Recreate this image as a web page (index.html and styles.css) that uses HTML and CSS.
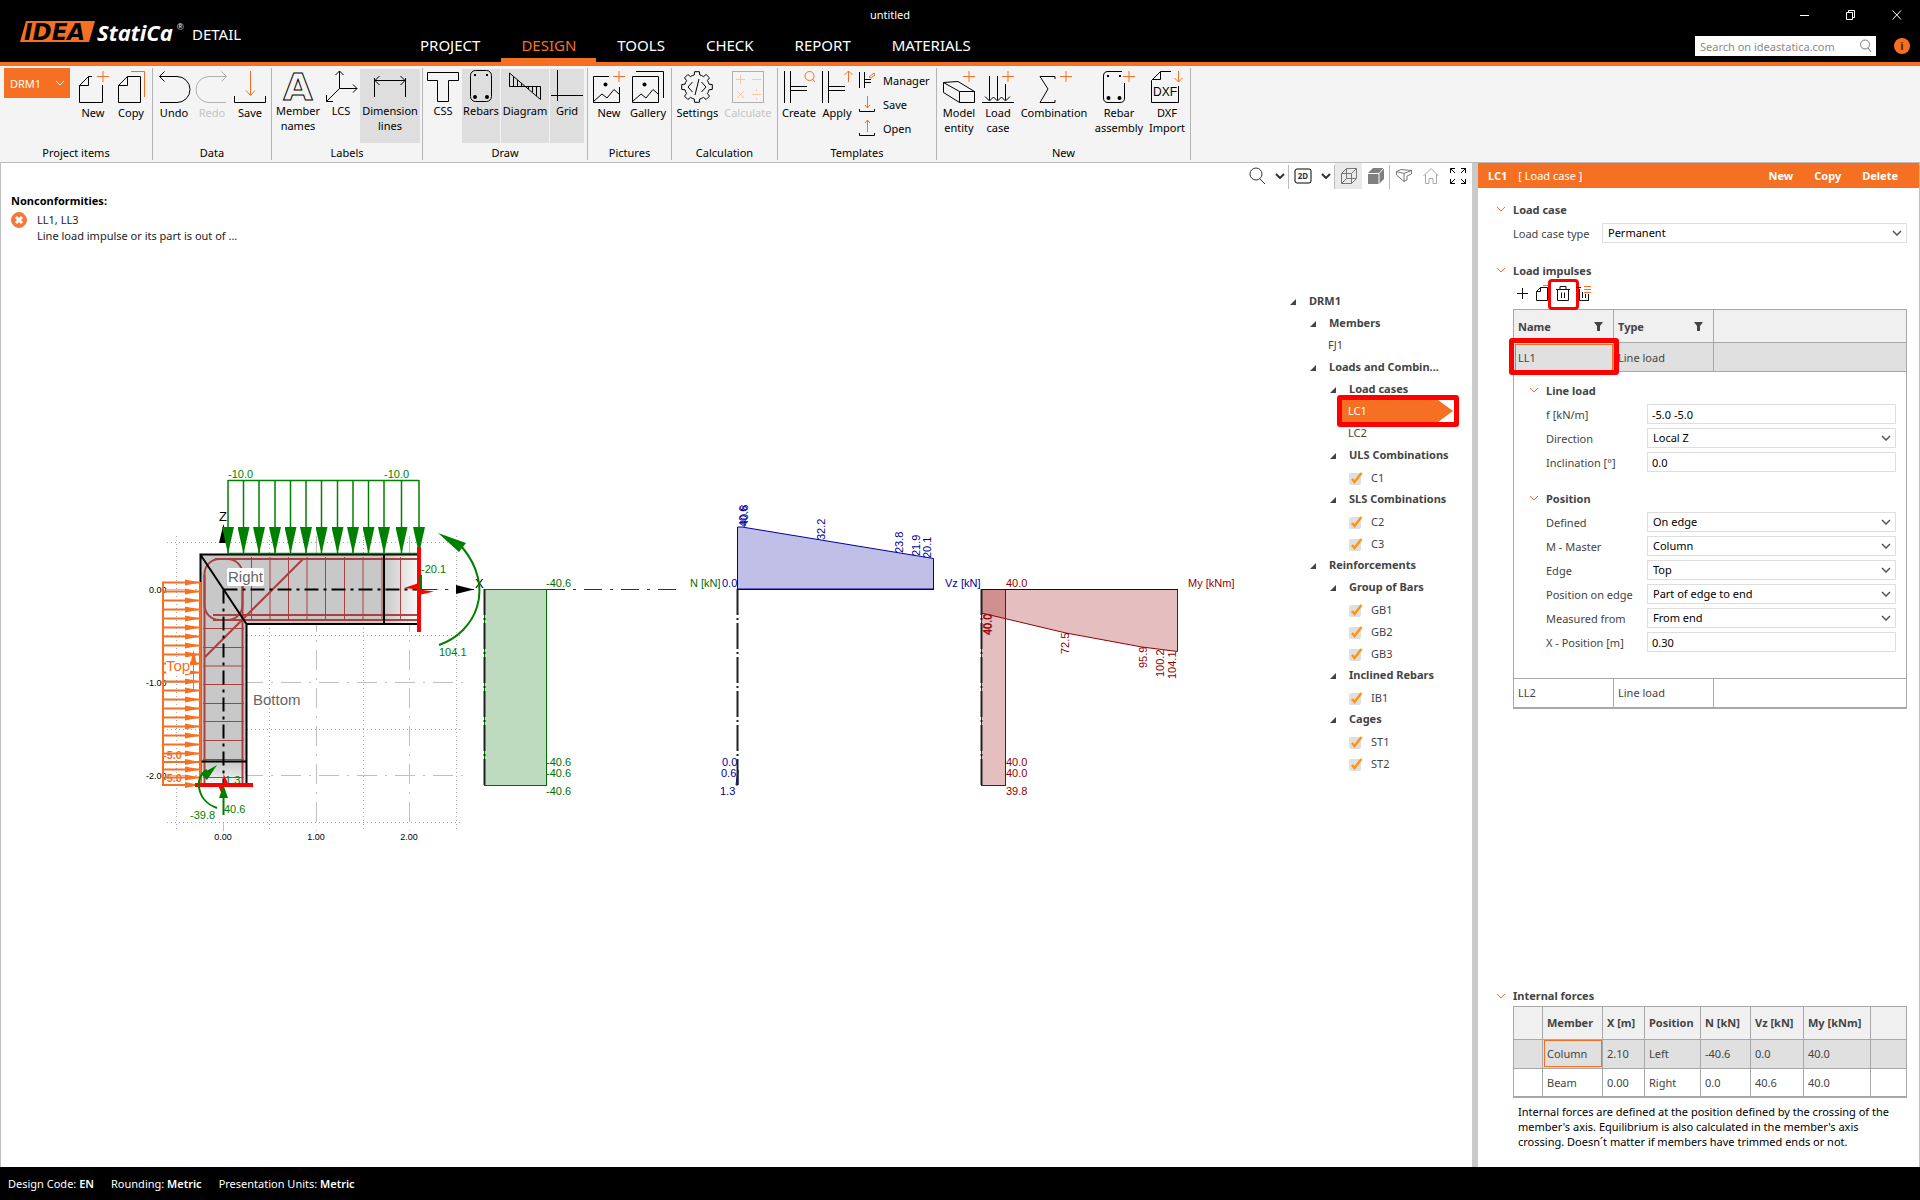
FILE: index.html
```html
<!DOCTYPE html>
<html lang="en">
<head>
<meta charset="utf-8">
<title>IDEA StatiCa Detail - untitled</title>
<link rel="stylesheet" href="styles.css">
</head>
<body>
<svg class="defs" aria-hidden="true">
  <symbol id="plus" viewBox="0 0 32 32"><path class="o" d="M20 5.5H32M26 0V11"/></symbol>
  <symbol id="chev" viewBox="0 0 10 6"><path d="M1 1l4 4 4-4"/></symbol>
</svg>

<header class="top">
  <div class="brand">
    <svg class="logo" width="166" height="28" viewBox="0 0 166 28">
      <path d="M6 3H75L69 24H0Z" fill="#f57022"/>
      <text x="4" y="22" class="logo-idea">IDEA</text>
      <text x="77" y="23" class="logo-stat">StatiCa</text>
      <text x="157" y="12" class="logo-reg">®</text>
    </svg>
    <span class="product">DETAIL</span>
  </div>
  <nav class="tabs">
    <a href="#">PROJECT</a><a href="#" class="active">DESIGN</a><a href="#">TOOLS</a><a href="#">CHECK</a><a href="#">REPORT</a><a href="#">MATERIALS</a>
  </nav>
  <h1 class="doc-title">untitled</h1>
  <div class="top-right">
    <div class="win">
      <button aria-label="Minimize"><svg width="12" height="12"><path d="M1 6.5H10"/></svg></button>
      <button aria-label="Restore"><svg width="12" height="12"><path d="M1.500 3.500H7.500V10.500H1.500ZM3.500 3V1.500H9.500V8.500H8"/></svg></button>
      <button aria-label="Close"><svg width="12" height="12"><path d="M1.500 1.500L10 10.500M10 1.500L1.500 10.500"/></svg></button>
    </div>
    <div class="search-row">
      <label class="search">
        <input type="text" placeholder="Search on ideastatica.com" aria-label="Search on ideastatica.com">
        <svg width="14" height="14"><circle cx="7" cy="5.500" r="4.500"/><path d="M10 9L13 13"/></svg>
      </label>
      <button class="info" aria-label="Info">i</button>
    </div>
  </div>
</header>

<div class="ribbon">
  <section class="group g1">
    <div class="row">
      <button class="drm">DRM1 <svg width="10" height="6"><use href="#chev"/></svg></button>
      <button class="rb w38"><svg class="ic"><path d="M25.500 14V31.500H2.500V14.500L11.500 5.500H15M11.500 5.500V14.500H2.500"/><use href="#plus"/></svg>New</button>
      <button class="rb w38"><svg class="ic"><path d="M12.500 5.500H25.500V31.500H3.500V14.500ZM12.500 5.500V14.500H3.500"/><path class="o" d="M16 .5H29.500V26"/></svg>Copy</button>
    </div>
    <h2>Project items</h2>
  </section>
  <section class="group g2">
    <div class="row">
      <button class="rb w38"><svg class="ic"><path d="M1.500 5.500H19a13 13 0 0 1 0 26H2M6.500 .5L1.500 5.500L6.500 10.500"/></svg>Undo</button>
      <button class="rb w38 off" disabled><svg class="ic"><path d="M30.500 5.500H13a13 13 0 0 0 0 26H30M25.500 .5L30.500 5.500L25.500 10.500"/></svg>Redo</button>
      <button class="rb w38"><svg class="ic"><path d="M.5 25V31.500H31.500V25"/><path class="o" d="M16.500 0V24M12 19.500L16.500 24.500L21 19.500"/></svg>Save</button>
    </div>
    <h2>Data</h2>
  </section>
  <section class="group g3 flags">
    <div class="row">
      <button class="rb w48"><svg class="ic"><text x="16" y="30" class="ic-a">A</text></svg>Member names</button>
      <button class="rb w38"><svg class="ic"><path d="M14.500 18.500V1M10.500 5L14.500 1L18.500 5M14.500 18.500H32M28 14.500L32 18.500L28 22.500M14.500 18.500L1.500 31.500M1.500 25V31.500H8"/></svg>LCS</button>
      <button class="rb w60 on"><svg class="ic"><path d="M.5 8V27M31.500 8V27M1 10.500H31M5.500 6L1 10.500L5.500 15M26.500 6L31 10.500L26.500 15"/></svg>Dimension lines</button>
    </div>
    <h2>Labels</h2>
  </section>
  <section class="group g4 flags">
    <div class="row">
      <button class="rb w38"><svg class="ic"><path d="M.5 2.500H31.500V10.500H21.500V31.500H10.500V10.500H.5Z"/></svg>CSS</button>
      <button class="rb w38 on"><svg class="ic"><rect x="5.500" y=".5" width="21" height="31" rx="5"/><path class="f" d="M9 4h2v2H9zM21 4h2v2h-2z"/><circle class="f" cx="10" cy="27" r="2"/><circle class="f" cx="22" cy="27" r="2"/></svg>Rebars</button>
      <button class="rb w48 on"><svg class="ic"><path d="M.5 16.500V3L31.500 29.500V16.500ZM4.500 7V16M8.500 10V16M12.500 13V16M19.500 17V19M23.500 17V22M27.500 17V26"/></svg>Diagram</button>
      <button class="rb w34 on"><svg class="ic"><path d="M6.500 0V31M0 25.500H32"/></svg>Grid</button>
    </div>
    <h2>Draw</h2>
  </section>
  <section class="group g5">
    <div class="row">
      <button class="rb w38"><svg class="ic"><path d="M16 5.500H.5V31.500H26.500V16M1 30L9 23L14 27L21 18.500L26 23"/><circle class="f" cx="12.500" cy="13.500" r="2"/><use href="#plus"/></svg>New</button>
      <button class="rb w40"><svg class="ic"><path d="M.5 5.500H26.500V31.500H.5ZM1 30L9 23L14 27L21 18.500L26 23M4 .5H31.500V27"/><circle class="f" cx="12.500" cy="13.500" r="2"/></svg>Gallery</button>
    </div>
    <h2>Pictures</h2>
  </section>
  <section class="group g6">
    <div class="row">
      <button class="rb w48"><svg class="ic"><path transform="translate(16 16)" d="M12-2.800L15.300-2.400V2.400L12 2.800A12.300 12.300 0 0 1 10.400 6.500L12.500 9.100L9.100 12.500L6.500 10.400A12.300 12.300 0 0 1 2.800 12L2.400 15.300H-2.400L-2.800 12A12.300 12.300 0 0 1-6.500 10.400L-9.100 12.500L-12.500 9.100L-10.400 6.500A12.300 12.300 0 0 1-12 2.800L-15.300 2.400V-2.400L-12-2.800A12.300 12.300 0 0 1-10.400-6.500L-12.500-9.100L-9.100-12.500L-6.500-10.400A12.300 12.300 0 0 1-2.800-12L-2.400-15.300H2.400L2.800-12A12.300 12.300 0 0 1 6.500-10.400L9.100-12.500L12.500-9.100L10.400-6.500A12.300 12.300 0 0 1 12-2.800Z"/><path d="M11.500 11L7 16L11.500 21M20.500 11L25 16L20.500 21M18 8L14 24"/></svg>Settings</button>
      <button class="rb w56 off" disabled><svg class="ic"><rect x=".5" y=".5" width="31" height="31"/><path class="p" d="M4 8.500H13M8.500 4V13M20 8.500H29M5 20L12 27M12 20L5 27M20 23.500H29M24.500 18V20M24.500 27V29"/></svg>Calculate</button>
    </div>
    <h2>Calculation</h2>
  </section>
  <section class="group g7">
    <div class="row">
      <button class="rb w38"><svg class="ic"><path d="M1.500 0V32M7.500 0V32M8 15.500H24M8 19.500H24"/><circle class="o" cx="26.500" cy="5" r="4.500"/><path class="o" d="M29.500 8L32 11"/></svg>Create</button>
      <button class="rb w38"><svg class="ic"><path d="M1.500 0V32M7.500 0V32M8 15.500H24M8 19.500H24"/><path class="o" d="M27.500 0V11M23.500 4L27.500 0L31.500 4"/></svg>Apply</button>
      <div class="stack">
        <button><svg width="16" height="16"><path d="M.5 0V16M5.500 0V16M6 7.500H12M6 10.500H12"/><path class="o" d="M10 5L15 1L16 3L12 6Z"/></svg>Manager</button>
        <button><svg width="16" height="16"><path d="M.5 13V15.500H15.500V13"/><path class="o" d="M8.500 0V12M6 9L8.500 12L11 9"/></svg>Save</button>
        <button><svg width="16" height="16"><path d="M.5 13V15.500H15.500V13"/><path class="o" d="M8.500 12V0M6 3L8.500 0L11 3"/></svg>Open</button>
      </div>
    </div>
    <h2>Templates</h2>
  </section>
  <section class="group g8">
    <div class="row">
      <button class="rb w40"><svg class="ic"><path d="M.5 11.500L16.500 20.500H31.500V31.500H16.500L.5 21.500ZM16.500 20.500V31.500M.5 11.500L15 10.500L31.500 20.500"/><use href="#plus"/></svg>Model entity</button>
      <button class="rb w38"><svg class="ic"><path d="M0 31.500H32M7.500 5V29M15.500 5V29M23.500 13V29M3 25.500L7.500 30L11.500 26L15.500 30L19.500 26L23.500 30L28 25.500"/><use href="#plus"/></svg>Load case</button>
      <button class="rb w74"><svg class="ic"><path d="M17 8V5.500H2L10 18L2 31.500H17V29"/><use href="#plus" x="2"/></svg>Combination</button>
      <button class="rb w56"><svg class="ic"><path d="M19 .5H5Q.5 .5 .5 5V27Q.5 31.500 5 31.500H17Q21.500 31.500 21.500 27V12"/><path class="f" d="M4 4h2v2H4zM16 4h2v2h-2z"/><circle class="f" cx="5.500" cy="27" r="2"/><circle class="f" cx="16.500" cy="27" r="2"/><use href="#plus"/></svg>Rebar assembly</button>
      <button class="rb w40"><svg class="ic"><path d="M20 .5H9.500L.5 9.500V31.500H27.500V15M9.500 .5V8.500H1"/><text x="14" y="25" class="ic-dxf">DXF</text><path class="o" d="M27.500 0V11M23.500 7L27.500 11L31.500 7"/></svg>DXF Import</button>
    </div>
    <h2>New</h2>
  </section>
</div>

<main class="work">
  <div class="view">
    <div class="view-tools">
      <button class="t34"><svg width="18" height="18"><circle cx="8" cy="7" r="6"/><path d="M12 12L17 17"/></svg></button>
      <button class="t16"><svg class="dd" width="10" height="6"><use href="#chev"/></svg></button>
      <i></i>
      <button class="t34"><svg width="18" height="18"><rect class="thick" x="1" y="2" width="16" height="14" rx="2"/><text x="9" y="12" class="ic-2d">2D</text></svg></button>
      <button class="t16"><svg class="dd" width="10" height="6"><use href="#chev"/></svg></button>
      <i></i>
      <button class="t28 sel"><svg width="18" height="18"><path class="g" d="M1.500 6.500H11.500V16.500H1.500ZM6.500 1.500H16.500V11.500L11.500 16.500M1.500 6.500L6.500 1.500V11.500H16.500M11.500 6.500L16.500 1.500M1.500 16.500L6.500 11.500"/></svg></button>
      <button class="t28"><svg width="18" height="18"><path class="gf" d="M1 6L6 1H17V12L12 17H1Z"/><path class="wl" d="M1 6.500H12V17M12 6.500L17 1"/></svg></button>
      <i></i>
      <button class="t28"><svg width="18" height="18"><path class="g" d="M1.500 4.500L6 2.500L16.500 3.500L9 6.500ZM1.500 4.500V8L9 14.500V6.500M9 14.500L12 13V9L16.500 7V3.500"/></svg></button>
      <button class="t28"><svg width="18" height="18"><path class="g2" d="M1.500 9L9 1.500L16.500 9M3.500 7.500V16.500H7V11.500H11V16.500H14.500V7.500"/></svg></button>
      <button class="t28"><svg width="18" height="18"><path class="ex" d="M1.500 6V1.500H6M1.500 1.500L6 6M12 1.500H16.500V6M16.500 1.500L12 6M1.500 12V16.500H6M1.500 16.500L6 12M16.500 12V16.500H12M16.500 16.500L12 12"/></svg></button>
    </div>
    <div class="view-body">
      <div class="scene">
        <div class="nonconf">
          <strong>Nonconformities:</strong>
          <div class="issue">
            <svg width="16" height="16"><circle cx="8" cy="8" r="7.500" fill="#f5793a" stroke="#f5793a"/><path d="M5 5L11 11M11 5L5 11" stroke="#fff" stroke-width="3"/></svg>
            <p>LL1, LL3<br>Line load impulse or its part is out of ...</p>
          </div>
        </div>
        <svg class="drawing" width="1279" height="620" viewBox="1 244 1279 620">
          <defs>
            <linearGradient id="endX"><stop offset="0" stop-color="#c8c8c8"/><stop offset="1" stop-color="#fafafa"/></linearGradient>
            <linearGradient id="endY" x2="0" y2="1"><stop offset="0" stop-color="#c8c8c8"/><stop offset="1" stop-color="#fafafa"/></linearGradient>
            <marker id="gArr" markerUnits="userSpaceOnUse" markerWidth="27" markerHeight="12" refX="27" refY="6" orient="auto"><path d="M0 0L27 6L0 12Z" fill="#008000"/></marker>
            <marker id="oArr" markerUnits="userSpaceOnUse" markerWidth="15" markerHeight="8" refX="15" refY="4" orient="auto"><path d="M0 1L15 4L0 7Z" fill="#f57022"/></marker>
          </defs>
          <g class="dots"><path d="M176.500 536V831M269.500 536V831M363.500 536V831M456.500 536V831M167 542.500H463M167 635.500H463M167 729.500H463M167 822.500H463"/></g>
          <g class="dash"><path d="M316.500 536V831M409.500 536V831M223.500 785V831M167 589.500H200M419 589.500H460M167 682.500H465M167 775.500H465"/></g>
          <g class="tick"><text x="149" y="593">0.00</text><text x="146" y="686">-1.00</text><text x="146" y="779">-2.00</text><text x="223" y="840" class="mid">0.00</text><text x="316" y="840" class="mid">1.00</text><text x="409" y="840" class="mid">2.00</text></g>

          <path d="M200 554H384V624H247V762H200Z" fill="#c8c8c8"/>
          <rect x="384" y="554" width="35" height="70" fill="url(#endX)"/>
          <rect x="200" y="762" width="47" height="23" fill="url(#endY)"/>
          <g class="rebar">
            <path d="M215 559H419M213 615H419M213 620H419M204.500 575V784M242.500 575V784M303 559L205 657"/>
            <rect x="204.500" y="559" width="38" height="61" rx="15"/>
            <path class="thin" d="M251.500 557V621M270 557V621M288.500 557V621M307 557V621M325.500 557V621M344.500 557V621M363 557V621M382 557V621M400.500 557V621M203 628.500H244M203 647.500H244M203 666H244M203 684.500H244M203 703.500H244M203 721.500H244M203 740.500H244M203 759.500H244M203 777.500H244"/>
          </g>
          <path class="outline" d="M419 554.500H200.500V785M419 624H246.500V785M200 554L246.500 624M384 554V624M200 761.500H247"/>
          <path class="axis" d="M223.500 589.500H419M223.500 589.500V785"/>
          <path class="axis-thin" d="M419 589.500H476M547 589.500H677"/>
          <path d="M223.500 524L219 543H228ZM456 585V594L474 589.500Z"/>
          <text x="219" y="521" class="ax">Z</text><text x="475" y="588" class="ax">X</text>

          <g class="gload">
            <path d="M228 480.500H419M228 553.500H419"/>
            <path class="m" d="M228 480V554"/><path class="m" d="M243.500 480V554"/><path class="m" d="M259 480V554"/><path class="m" d="M275 480V554"/><path class="m" d="M290.500 480V554"/><path class="m" d="M306 480V554"/><path class="m" d="M321.500 480V554"/><path class="m" d="M337.500 480V554"/><path class="m" d="M353 480V554"/><path class="m" d="M368.500 480V554"/><path class="m" d="M384 480V554"/><path class="m" d="M401.500 480V554"/><path class="m" d="M419 480V554"/>
          </g>
          <g class="oload">
            <path d="M163 582V786M200.500 582V786"/>
            <path class="m" d="M162 582.500H200"/><path class="m" d="M162 591.500H200"/><path class="m" d="M162 600.500H200"/><path class="m" d="M162 609.500H200"/><path class="m" d="M162 618.500H200"/><path class="m" d="M162 627.500H200"/><path class="m" d="M162 636.500H200"/><path class="m" d="M162 645.500H200"/><path class="m" d="M162 654.500H200"/><path class="m" d="M162 663.500H200"/><path class="m" d="M162 672.500H200"/><path class="m" d="M162 681.500H200"/><path class="m" d="M162 690.500H200"/><path class="m" d="M162 699.500H200"/><path class="m" d="M162 708.500H200"/><path class="m" d="M162 717.500H200"/><path class="m" d="M162 726.500H200"/><path class="m" d="M162 735.500H200"/><path class="m" d="M162 744.500H200"/><path class="m" d="M162 753.500H200"/><path class="m" d="M162 762H200"/><path class="m" d="M162 769.500H200"/><path class="m" d="M162 777.500H200"/><path class="m" d="M162 785H200"/>
            <rect x="166" y="657" width="24" height="17" rx="2" fill="#fff" stroke="none"/>
            <path class="m1" d="M193.500 690V655"/><path d="M193.500 650L190 665H197Z" class="of"/>
          </g>
          <text x="166" y="671" class="lbl otext">Top</text>
          <text x="163" y="759" class="val otext b">-5.0</text><text x="163" y="782" class="val otext b">-5.0</text>
          <rect x="227" y="568" width="37" height="18" rx="2" fill="#fff"/>
          <text x="228" y="582" class="lbl">Right</text>
          <text x="253" y="705" class="lbl">Bottom</text>

          <g class="red"><path d="M419 547V632M195 785H253"/><path class="rf" d="M404 588L419 583V589.500L434 591.500L419 595V589.500ZM223.500 774L229 785L223.500 785L222 795L218 785H223.500Z"/></g>
          <g class="gm">
            <path d="M439 645C476 632 496 588 462 547M421 575V589M217 808C196 801 194 776 207 770M223.500 815V795"/>
            <path class="gf2" d="M438 533L466 543L459 552ZM217 765L201 774L207 780ZM223.500 785L219 798H228Z"/>
          </g>
          <g class="val gtext"><text x="228" y="478">-10.0</text><text x="384" y="478">-10.0</text><text x="421" y="573">-20.1</text><text x="439" y="656">104.1</text><text x="190" y="819">-39.8</text><text x="224" y="813">40.6</text><text x="225" y="784">1.3</text></g>

          <g class="val ntext">
            <rect x="484.500" y="589.500" width="62" height="196"/>
            <text x="546" y="587">-40.6</text><text x="546" y="766">-40.6</text><text x="546" y="777">-40.6</text><text x="546" y="795">-40.6</text><text x="690" y="587">N [kN]</text>
          </g>
          <path class="base" d="M484.500 589V785"/>

          <g class="val vtext">
            <path d="M737.500 589V527H742L933.500 558.500V589Z"/><path d="M738 770L736 785H738Z"/>
            <text x="722" y="587">0.0</text><text x="722" y="766">0.0</text><text x="721" y="777">0.6</text><text x="720" y="795">1.3</text><text x="945" y="587">Vz [kN]</text>
            <text transform="translate(747 527) rotate(-90)">40.6</text><text transform="translate(748 526) rotate(-90)">40.8</text><text transform="translate(825 540) rotate(-90)">32.2</text><text transform="translate(903 553) rotate(-90)">23.8</text><text transform="translate(920 556) rotate(-90)">21.9</text><text transform="translate(931 558) rotate(-90)">20.1</text>
          </g>
          <path class="base" d="M737.500 589V785"/><path class="solid" d="M738 589.500H934"/>

          <g class="val mtext">
            <path d="M981.500 589.500V613L1066 633L1142 647L1177.500 651.500V589.500Z"/><rect x="981.500" y="589.500" width="24" height="196"/>
            <text x="1006" y="587">40.0</text><text x="1006" y="766">40.0</text><text x="1006" y="777">40.0</text><text x="1006" y="795">39.8</text><text x="1188" y="587">My [kNm]</text>
            <text transform="translate(991 635) rotate(-90)">40.0</text><text transform="translate(992 635) rotate(-90)">40.0</text><text transform="translate(1069 654) rotate(-90)">72.5</text><text transform="translate(1147 668) rotate(-90)">95.9</text><text transform="translate(1164 677) rotate(-90)">100.2</text><text transform="translate(1176 679) rotate(-90)">104.1</text>
          </g>
          <path class="base" d="M981.500 589V785"/><path class="solid" d="M982 589.500H1178"/>
        </svg>
      </div>
      <ul class="tree">
        <li class="n l0">DRM1</li>
        <li class="n l1">Members</li>
        <li class="leaf l1">FJ1</li>
        <li class="n l1">Loads and Combin...</li>
        <li class="n l2">Load cases</li>
        <li class="leaf l2 current">LC1</li>
        <li class="leaf l2">LC2</li>
        <li class="n l2">ULS Combinations</li>
        <li class="chk"><label><input type="checkbox" checked>C1</label></li>
        <li class="n l2">SLS Combinations</li>
        <li class="chk"><label><input type="checkbox" checked>C2</label></li>
        <li class="chk"><label><input type="checkbox" checked>C3</label></li>
        <li class="n l1">Reinforcements</li>
        <li class="n l2">Group of Bars</li>
        <li class="chk"><label><input type="checkbox" checked>GB1</label></li>
        <li class="chk"><label><input type="checkbox" checked>GB2</label></li>
        <li class="chk"><label><input type="checkbox" checked>GB3</label></li>
        <li class="n l2">Inclined Rebars</li>
        <li class="chk"><label><input type="checkbox" checked>IB1</label></li>
        <li class="n l2">Cages</li>
        <li class="chk"><label><input type="checkbox" checked>ST1</label></li>
        <li class="chk"><label><input type="checkbox" checked>ST2</label></li>
      </ul>
    </div>
  </div>

  <aside class="panel">
    <div class="panel-head">
      <b>LC1</b><span>[ Load case ]</span>
      <div class="acts"><button>New</button><button>Copy</button><button>Delete</button></div>
    </div>
    <div class="panel-body">
      <h3><svg width="10" height="6"><use href="#chev"/></svg>Load case</h3>
      <div class="field outer"><label for="lct">Load case type</label><select id="lct"><option>Permanent</option></select></div>
      <h3 class="h-imp"><svg width="10" height="6"><use href="#chev"/></svg>Load impulses</h3>
      <div class="imp-tools">
        <button aria-label="Add"><svg width="16" height="16"><path d="M4 8.500H15M9.500 3V14"/></svg></button>
        <button aria-label="Copy"><svg width="16" height="16"><path d="M6.500 2.500H13.500V15.500H2.500V6.500ZM6.500 2.500V6.500H2.500"/><path class="o" d="M9 .5H16V12"/></svg></button>
        <button aria-label="Delete" class="marked"><svg width="16" height="16"><path d="M1 4.500H15M5 4V1.500H11V4M2.500 4.500V15.500H13.500V4.500M6.500 7.500V13M9.500 7.500V13"/></svg></button>
        <button aria-label="Delete all"><svg width="16" height="16"><path d="M0 2.500H5M3.500 4V15.500H12.500V9M6.500 7V13M9.500 9V13"/><path class="o" d="M8 1.500H15M8 4.500H15M8 7.500H15"/></svg></button>
      </div>
      <table class="grid imp">
        <colgroup><col class="c100"><col class="c100"><col></colgroup>
        <thead><tr>
          <th>Name <svg width="10" height="10"><path class="f" d="M0 0H9L6 4V9H3V4Z"/></svg></th>
          <th>Type <svg width="10" height="10"><path class="f" d="M0 0H9L6 4V9H3V4Z"/></svg></th><th></th></tr></thead>
        <tbody>
          <tr class="cur"><td class="cell-cur marked-cell">LL1</td><td>Line load</td><td></td></tr>
          <tr class="detail"><td colspan="3">
            <h3><svg width="10" height="6"><use href="#chev"/></svg>Line load</h3>
            <div class="field"><label for="f1">f [kN/m]</label><input id="f1" type="text" value="-5.0 -5.0"></div>
            <div class="field"><label for="f2">Direction</label><select id="f2"><option>Local Z</option></select></div>
            <div class="field"><label for="f3">Inclination [°]</label><input id="f3" type="text" value="0.0"></div>
            <h3 class="h-pos"><svg width="10" height="6"><use href="#chev"/></svg>Position</h3>
            <div class="field"><label for="p1">Defined</label><select id="p1"><option>On edge</option></select></div>
            <div class="field"><label for="p2">M - Master</label><select id="p2"><option>Column</option></select></div>
            <div class="field"><label for="p3">Edge</label><select id="p3"><option>Top</option></select></div>
            <div class="field"><label for="p4">Position on edge</label><select id="p4"><option>Part of edge to end</option></select></div>
            <div class="field"><label for="p5">Measured from</label><select id="p5"><option>From end</option></select></div>
            <div class="field"><label for="p6">X - Position [m]</label><input id="p6" type="text" value="0.30"></div>
          </td></tr>
          <tr><td>LL2</td><td>Line load</td><td></td></tr>
        </tbody>
      </table>
      <div class="forces">
        <h3><svg width="10" height="6"><use href="#chev"/></svg>Internal forces</h3>
        <table class="grid">
          <colgroup><col class="c29"><col class="c60"><col class="c42"><col class="c56"><col class="c50"><col class="c53"><col class="c67"><col></colgroup>
          <thead><tr><th></th><th>Member</th><th>X [m]</th><th>Position</th><th>N [kN]</th><th>Vz [kN]</th><th>My [kNm]</th><th></th></tr></thead>
          <tbody>
            <tr class="cur"><td></td><td class="cell-cur">Column</td><td>2.10</td><td>Left</td><td>-40.6</td><td>0.0</td><td>40.0</td><td></td></tr>
            <tr><td></td><td>Beam</td><td>0.00</td><td>Right</td><td>0.0</td><td>40.6</td><td>40.0</td><td></td></tr>
          </tbody>
        </table>
        <p>Internal forces are defined at the position defined by the crossing of the member's axis. Equilibrium is also calculated in the member's axis crossing. Doesn´t matter if members have trimmed ends or not.</p>
      </div>
    </div>
  </aside>
</main>

<footer class="status"><span>Design Code: <b>EN</b></span><span>Rounding: <b>Metric</b></span><span>Presentation Units: <b>Metric</b></span></footer>
</body>
</html>
```
FILE: styles.css
```css
*, *::before, *::after { box-sizing: border-box; }
body {
  margin: 0;
  min-height: 100vh;
  display: flex;
  flex-direction: column;
  font: 11px/15px "Noto Sans", "Open Sans", sans-serif;
  color: #000;
  background: #fff;
}
button, input, select { font: inherit; color: inherit; }
button { border: 0; padding: 0; margin: 0; background: none; }
h1, h2, h3, p, ul { margin: 0; padding: 0; font-size: inherit; }
a { text-decoration: none; color: inherit; }
svg { fill: none; stroke: currentColor; display: block; flex: none; }
svg text { stroke: none; fill: currentColor; }
.defs { position: absolute; width: 0; height: 0; }
.o { stroke: #f57022; fill: none; }
.p { stroke: #fbc6a5; }
.f { fill: currentColor; stroke: none; }

/* title bar */
.top {
  background: #000;
  color: #fff;
  height: 66px;
  border-bottom: 4px solid #f57022;
  display: flex;
  position: relative;
  flex: none;
}
.brand { width: 400px; padding: 18px 0 0 20px; display: flex; gap: 6px; }
.logo .logo-idea { font: oblique bold 23px "DejaVu Sans", sans-serif; fill: #000; }
.logo .logo-stat { font: italic bold 22px "Open Sans", sans-serif; fill: #fff; }
.logo .logo-reg { font: 9px "Liberation Sans", sans-serif; fill: #fff; }
.logo path { stroke: none; }
.product { font-size: 15px; line-height: 33px; }
.tabs { display: flex; align-items: flex-end; gap: 1px; }
.tabs a { padding: 0 20px; font-size: 15px; line-height: 26px; border-bottom: 4px solid transparent; }
.tabs .active { color: #f57022; border-color: #f57022; }
.doc-title { position: absolute; left: 0; right: 140px; top: 7px; text-align: center; font-weight: 400; pointer-events: none; }
.top-right { margin-left: auto; padding-right: 10px; display: flex; flex-direction: column; align-items: flex-end; }
.win { display: flex; gap: 34px; padding: 9px 7px 0 0; height: 36px; }
.win button { height: 12px; }
.search-row { display: flex; align-items: center; gap: 18px; }
.search { display: flex; align-items: center; width: 181px; height: 20px; background: #fff; color: #777; padding: 0 4px 0 5px; }
.search input { border: 0; padding: 0; min-width: 0; flex: 1; outline: 0; background: none; }
.search input::placeholder { color: #8a8a8a; }
.info { width: 16px; height: 16px; border-radius: 8px; background: #f57022; color: #5a2000; font-weight: 700; line-height: 16px; }

/* ribbon */
.ribbon { display: flex; background: #f4f4f4; border-bottom: 1px solid #bbb; height: 97px; padding-top: 2px; flex: none; }
.group { display: flex; flex-direction: column; height: 92px; border-right: 1px solid #b4b4b4; flex: none; }
.g1 { width: 153px; } .g2 { width: 119px; } .g3 { width: 151px; } .g4 { width: 165px; }
.g5 { width: 84px; } .g6 { width: 106px; } .g7 { width: 159px; } .g8 { width: 254px; }
.group .row { display: flex; flex: 1; padding: 1px 2px 0; }
.group h2 { font-weight: 400; text-align: center; line-height: 15px; height: 15px; }
.drm { width: 66px; height: 30px; margin: -1px 4px 0 2px; background: #f57022; color: #fff; display: flex; align-items: center; justify-content: space-between; padding: 0 5px 0 6px; }
.rb { height: 74px; padding-top: 2px; display: flex; flex-direction: column; align-items: center; text-align: center; gap: 2px; line-height: 15px; }
.flags .rb { padding-top: 1px; gap: 1px; }
.g4 .row { padding-left: 1px; }
.g4 .on + .on { margin-left: 1px; }
.ic { width: 32px; height: 32px; overflow: visible; }
.w34 { width: 34px; } .w38 { width: 38px; } .w40 { width: 40px; } .w48 { width: 48px; }
.w56 { width: 56px; } .w60 { width: 60px; } .w74 { width: 74px; }
.on { background: #dedede; }
.off { color: #c4c4c4; }
.off .ic { stroke: #b0b0b0; }
.ic-a { font: bold 38px "DejaVu Sans", sans-serif; text-anchor: middle; }
svg .ic-a { fill: none; stroke: #000; }
.ic-dxf { font: 12px "Liberation Sans", sans-serif; text-anchor: middle; }
.stack { display: flex; flex-direction: column; gap: 8px; padding: 3px 0 0 3px; }
.stack button { display: flex; align-items: center; gap: 8px; height: 16px; }

/* work area */
.work { flex: 1; display: flex; }
.view { flex: 1; min-width: 0; border-left: 1px solid #c0c0c0; display: flex; flex-direction: column; }
.view-tools { display: flex; justify-content: flex-end; height: 26px; color: #333; padding-right: 1px; }
.view-tools button { display: flex; align-items: center; justify-content: center; }
.view-tools i { width: 1px; background: #bbb; margin: 2px 0 0; }
.t34 { width: 28px; } .t16 { width: 17px; } .t28 { width: 27px; }
.sel { background: #eaeaea; }
.thick { stroke: #000; }
.dd { stroke-width: 2; }
.ex { stroke: #000; }
.ic-2d { font: bold 8px "Noto Sans", sans-serif; text-anchor: middle; }
.g { stroke: #777; } .g2 { stroke: #aaa; } .gf { fill: #808080; stroke: none; } .wl { stroke: #fff; }
.view-body { flex: 1; display: flex; }
.scene { flex: 1; min-width: 0; }
.nonconf { padding: 4px 10px 0; height: 55px; color: #222; }
.nonconf strong { display: block; color: #000; }
.issue { display: flex; gap: 10px; padding-top: 4px; line-height: 16px; }
.tree { width: 183px; padding-top: 101px; list-style: none; color: #444; flex: none; }
.tree li { height: 22px; line-height: 22px; position: relative; }
.n { font-weight: 700; display: flex; align-items: center; gap: 13px; }
.n::before { content: ""; border: 3px solid transparent; border-right-color: #444; border-bottom-color: #444; margin-top: 2px; }
.n.l0 { padding-left: 1px; } .n.l1 { padding-left: 21px; } .n.l2 { padding-left: 41px; }
.leaf.l1 { padding-left: 39px; } .leaf.l2 { padding-left: 59px; }
.current { color: #fff; z-index: 1; }
.current::before { content: ""; position: absolute; z-index: -1; left: 53px; top: 0; width: 111px; height: 22px; background: #f57022; clip-path: polygon(0 0, 96px 0, 100% 50%, 96px 100%, 0 100%); }
.current::after { content: ""; position: absolute; left: 48px; top: -5px; width: 122px; height: 32px; border: 5px solid #f00; border-radius: 3px; }
.chk label { display: flex; align-items: center; gap: 8px; padding: 2px 0 0 60px; height: 22px; }
.chk input { appearance: none; margin: 0; width: 14px; height: 13px; background: url('data:image/svg+xml,<svg xmlns="http://www.w3.org/2000/svg" width="14" height="13"><rect y="1" width="12" height="12" rx="2" fill="%23dfdfdf"/><path d="M3 7L5.500 10L12.500 1" fill="none" stroke="%23ff9410" stroke-width="2.500"/></svg>'); }

/* property panel */
.panel { width: 448px; border-left: 6px solid #cacaca; border-right: 1px solid #c0c0c0; display: flex; flex-direction: column; color: #444; flex: none; }
.panel-head { height: 25px; background: #f57022; color: #fff; display: flex; align-items: center; padding: 0 21px 0 10px; gap: 11px; }
.acts { margin-left: auto; display: flex; gap: 21px; font-weight: 700; }
.panel-body { flex: 1; display: flex; flex-direction: column; padding: 13px 12px 18px 35px; }
.panel h3 { display: flex; align-items: center; gap: 7px; margin-left: -17px; height: 16px; }
.panel h3 svg { color: #f57022; }
.field { display: flex; align-items: center; height: 20px; margin-bottom: 4px; }
.field label { width: 101px; padding-top: 1px; }
.field input, .field select { flex: 1; min-width: 0; height: 20px; border: 1px solid #dedede; padding: 0 4px; background-color: #fff; color: #000; border-radius: 0; outline: 0; }
.field select { appearance: none; padding: 0 4px 2px 5px; background: #fff url('data:image/svg+xml,<svg xmlns="http://www.w3.org/2000/svg" width="10" height="6"><path d="M1 1L5 5L9 1" fill="none" stroke="%23555" stroke-width="1.500"/></svg>') no-repeat right 4px center; }
.outer { margin-top: 6px; }
.outer label { width: 89px; }
.panel .h-imp { margin-top: 15px; }
.imp-tools { display: flex; gap: 5px; height: 31px; padding: 7px 0 0; color: #111; }
.imp-tools button { position: relative; height: 16px; }
.marked::after { content: ""; position: absolute; left: -7px; top: -6px; width: 31px; height: 31px; border: 3px solid #f00; border-radius: 4px; }
.grid { width: 394px; border-collapse: collapse; table-layout: fixed; border-bottom: 2px solid #a8a8a8; }
.grid th, .grid td { border: 1px solid #a8a8a8; text-align: left; padding: 0 4px; height: 29px; white-space: nowrap; }
.grid th { background: #f0f0f0; height: 33px; }
.grid th svg { float: right; margin: 3px 5px 0 0; }
.cur { background: #e0e0e0; }
.cell-cur { outline: 1px solid #f57022; outline-offset: -2px; }
.marked-cell { position: relative; }
.marked-cell::after { content: ""; position: absolute; left: -5px; top: -5px; width: 110px; height: 37px; border: 5px solid #f00; border-radius: 3px; z-index: 1; }
.c100 { width: 100px; } .c29 { width: 29px; } .c60 { width: 60px; } .c42 { width: 42px; }
.c56 { width: 56px; } .c50 { width: 50px; } .c53 { width: 53px; } .c67 { width: 67px; }
.grid .detail td { padding: 10px 10px 22px 32px; white-space: normal; }
.detail h3 { margin-bottom: 6px; }
.panel .h-pos { margin-top: 18px; }
.forces { margin-top: auto; }
.forces h3 { margin-bottom: 2px; }
.forces p { color: #000; padding: 6px 5px 0; }

.status { background: #000; color: #fff; height: 33px; display: flex; align-items: center; gap: 17px; padding: 0 8px; flex: none; }
.status b { font-weight: 600; }

/* drawing */
.drawing { font-family: "Liberation Sans", sans-serif; fill: #000; stroke: none; max-width: none; }
.dots { stroke: #aaa; stroke-dasharray: 1 3; }
.dash { stroke: #c0c0c0; stroke-dasharray: 20 8 2 8; }
.tick { font-size: 9px; }
.mid { text-anchor: middle; }
.rebar { stroke: #a52a2a; stroke-width: 2; fill: none; opacity: .85; }
.thin { stroke-width: 1; }
.outline { stroke: #000; stroke-width: 2; fill: none; }
.axis { stroke: #000; stroke-width: 2; stroke-dasharray: 14 5 3 5; }
.axis-thin { stroke: #333; stroke-dasharray: 18 8 3 8; }
.ax { font-size: 13px; }
.gload, .gm { stroke: #008000; fill: none; }
.gload { stroke-width: 1.5; }
.gload .m { marker-end: url(#gArr); }
.gload marker path, marker path { stroke: none; }
.gm { stroke-width: 2; }
.gf2 { fill: #008000; stroke: none; }
.oload { stroke: #f57022; fill: none; stroke-width: 2; }
.oload .m { marker-end: url(#oArr); }
.oload .m1 { stroke-width: 1; }
.of { fill: #f57022; stroke: none; }
.lbl { font-size: 15px; color: #666; }
.val { font-size: 11px; }
.val path, .val rect { stroke: currentColor; fill: currentColor; fill-opacity: .25; }
.drawing .otext { color: #f57022; }
.b { font-weight: 700; }
.gtext { color: #008000; }
.ntext { color: #007000; }
.vtext { color: #0000a0; }
.mtext { color: #960000; }
.red { stroke: #f00; stroke-width: 4; }
.rf { fill: #f00; stroke: none; }
.base { stroke: #222; stroke-width: 2; stroke-dasharray: 26 3 2 3; }
.solid { stroke: #111; }
```
